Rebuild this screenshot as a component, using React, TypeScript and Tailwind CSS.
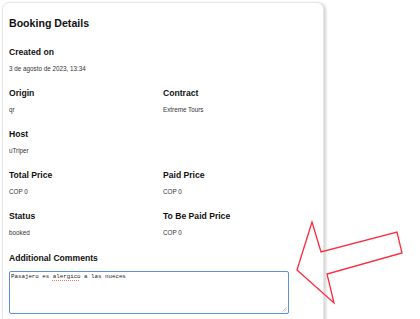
const fields: { label: string; value: string }[][] = [
  [{ label: "Created on", value: "3 de agosto de 2023, 13:34" }],
  [
    { label: "Origin", value: "qr" },
    { label: "Contract", value: "Extreme Tours" },
  ],
  [{ label: "Host", value: "uTriper" }],
  [
    { label: "Total Price", value: "COP 0" },
    { label: "Paid Price", value: "COP 0" },
  ],
  [
    { label: "Status", value: "booked" },
    { label: "To Be Paid Price", value: "COP 0" },
  ],
];

const Field = ({ label, value }: { label: string; value: string }) => (
  <div>
    <p className="text-[8.6px] leading-[12px] font-bold text-[#111]">{label}</p>
    <p className="mt-[6px] text-[6.3px] leading-[10px] text-[#333]">{value}</p>
  </div>
);

export default function App() {
  return (
    <div className="relative w-[420px] h-[319px] overflow-hidden bg-white font-['Liberation_Sans',Arial,sans-serif]">
      <div className="pt-[2px] pl-[2px]">
        <div className="w-[322px] h-[340px] rounded-[7px] border border-[#e6e6e6] bg-white shadow-[2px_1px_3px_rgba(0,0,0,0.18)] pt-[13px] px-[6px]">
          <h2 className="text-[10.6px] leading-[14px] font-bold text-[#111]">
            Booking Details
          </h2>
          <div className="mt-[16px] flex flex-col gap-[13px]">
            {fields.map((row, i) => (
              <div key={i} className="grid grid-cols-2">
                {row.map((f) => (
                  <Field key={f.label} label={f.label} value={f.value} />
                ))}
              </div>
            ))}
            <div className="mt-[1px]">
              <p className="text-[8.6px] leading-[12px] font-bold text-[#111]">
                Additional Comments
              </p>
              <div className="relative mt-[7px] w-[280px] h-[43px] rounded-[2px] border-[1.5px] border-[#5a8fdc] px-[1px] py-[1px] font-['Liberation_Mono',monospace] text-[5.8px] leading-[8px] text-[#222]">
                Pasajero es{" "}
                <span className="underline decoration-dotted decoration-[#e87a74] decoration-[0.8px] underline-offset-[1.5px]">
                  alergico
                </span>{" "}
                a las nueces
                <svg
                  className="absolute right-[1px] bottom-[1px]"
                  width="5"
                  height="5"
                  viewBox="0 0 5 5"
                >
                  <path d="M4.5 0.5 L0.5 4.5 M4.5 2.5 L2.5 4.5" stroke="#999" strokeWidth="0.6" />
                </svg>
              </div>
            </div>
          </div>
        </div>
      </div>
      <svg
        className="absolute left-0 top-0 pointer-events-none"
        width="420"
        height="319"
        viewBox="0 0 420 319"
      >
        <polygon
          points="297,270 312,222 321,252 397,232 402,253 327,274 334,303"
          fill="none"
          stroke="#ff2a3d"
          strokeWidth="1.3"
          strokeLinejoin="miter"
        />
      </svg>
    </div>
  );
}
